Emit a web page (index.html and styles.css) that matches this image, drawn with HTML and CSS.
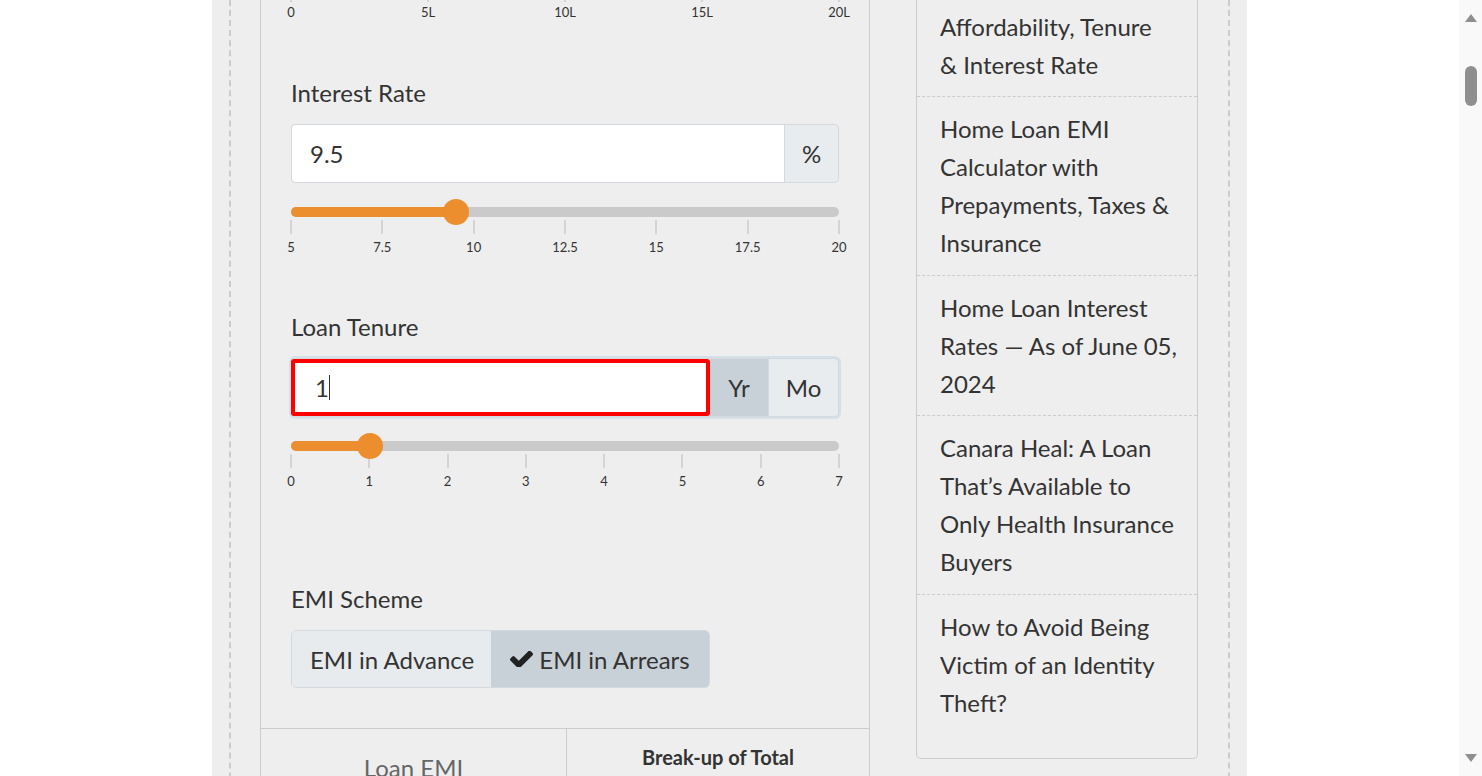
FILE: index.html
```html
<!DOCTYPE html>
<html lang="en">
<head>
<meta charset="utf-8">
<title>Home Loan EMI Calculator</title>
<link rel="stylesheet" href="styles.css">
</head>
<body>
<div class="page">
  <div class="frame">
    <div class="layout">
      <main class="calc">
        <div class="form">
          <div class="scale scale-top">
            <span class="tick"><i></i><b>0</b></span>
            <span class="tick"><i></i><b>5L</b></span>
            <span class="tick"><i></i><b>10L</b></span>
            <span class="tick"><i></i><b>15L</b></span>
            <span class="tick"><i></i><b>20L</b></span>
          </div>

          <div class="field">
            <label class="field-label">Interest Rate</label>
            <div class="input-group">
              <div class="input-box">9.5</div>
              <span class="addon addon-pct">%</span>
            </div>
            <div class="slider">
              <div class="track">
                <div class="fill" style="width:30%"></div>
                <span class="thumb" style="left:30%"></span>
              </div>
              <div class="scale">
                <span class="tick"><i></i><b>5</b></span>
                <span class="tick"><i></i><b>7.5</b></span>
                <span class="tick"><i></i><b>10</b></span>
                <span class="tick"><i></i><b>12.5</b></span>
                <span class="tick"><i></i><b>15</b></span>
                <span class="tick"><i></i><b>17.5</b></span>
                <span class="tick"><i></i><b>20</b></span>
              </div>
            </div>
          </div>

          <div class="field">
            <label class="field-label">Loan Tenure</label>
            <div class="input-group input-group-focus">
              <div class="input-box input-box-active">1<span class="caret"></span></div>
              <span class="addon addon-yr addon-on">Yr</span>
              <span class="addon addon-mo">Mo</span>
            </div>
            <div class="slider">
              <div class="track">
                <div class="fill" style="width:14.2857%"></div>
                <span class="thumb" style="left:14.2857%"></span>
              </div>
              <div class="scale">
                <span class="tick"><i></i><b>0</b></span>
                <span class="tick"><i></i><b>1</b></span>
                <span class="tick"><i></i><b>2</b></span>
                <span class="tick"><i></i><b>3</b></span>
                <span class="tick"><i></i><b>4</b></span>
                <span class="tick"><i></i><b>5</b></span>
                <span class="tick"><i></i><b>6</b></span>
                <span class="tick"><i></i><b>7</b></span>
              </div>
            </div>
          </div>

          <div class="field field-scheme">
            <label class="field-label">EMI Scheme</label>
            <div class="btn-group">
              <span class="btn">EMI in Advance</span>
              <span class="btn btn-on"><svg class="check" viewBox="121 362 1550 1064" width="23" height="16" aria-hidden="true"><path d="M1671 566q0 40-28 68l-724 724-136 136q-28 28-68 28t-68-28l-136-136-362-362q-28-28-28-68t28-68l136-136q28-28 68-28t68 28l294 295 656-657q28-28 68-28t68 28l136 136q28 28 28 68z"/></svg>EMI in Arrears</span>
            </div>
          </div>
        </div>

        <div class="results">
          <div class="result-cell result-emi">Loan EMI</div>
          <div class="result-cell result-breakup">Break-up of Total</div>
        </div>
      </main>

      <aside class="sidebar">
        <ul class="post-list">
          <li class="post">Affordability, Tenure &amp;&nbsp;Interest Rate</li>
          <li class="post">Home Loan EMI Calculator with Prepayments, Taxes &amp; Insurance</li>
          <li class="post">Home Loan Interest Rates — As of June 05, 2024</li>
          <li class="post">Canara Heal: A Loan That’s Available to Only Health Insurance Buyers</li>
          <li class="post">How to Avoid Being Victim of an Identity Theft?</li>
        </ul>
      </aside>
    </div>
  </div>
</div>

<div class="scrollbar" aria-hidden="true">
  <span class="sb-up"></span>
  <span class="sb-thumb"></span>
  <span class="sb-down"></span>
</div>
</body>
</html>
```

FILE: styles.css
```css
* { box-sizing: border-box; }

html, body {
  margin: 0;
  padding: 0;
  background: #ffffff;
}

body {
  font-family: "Lato", "Liberation Sans", sans-serif;
  color: #333333;
}

.page {
  width: 1035px;
  margin-left: 212px;
  background: #eeeeee;
  padding: 0 17px;
}

.frame {
  border-left: 2px dashed #cccccc;
  border-right: 2px dashed #cccccc;
  padding: 0 31px 0 29px;
}

.layout {
  display: flex;
  align-items: flex-start;
  gap: 46px;
  min-height: 1200px;
}

/* ---------- calculator panel ---------- */
.calc {
  width: 610px;
  flex: none;
  align-self: stretch;
  border-left: 1px solid #cccccc;
  border-right: 1px solid #cccccc;
}

.form {
  padding: 0 30px 40px;
}

.field {
  margin-top: 57px;
}

.scale-top + .field {
  margin-top: 58px;
}

.field-scheme {
  margin-top: 95px;
}

.field-label {
  display: block;
  font-size: 24px;
  line-height: 30px;
  margin-bottom: 16px;
  color: #333333;
}

.input-group {
  display: flex;
  height: 59px;
  border: 1px solid #d3d9de;
  border-radius: 4px;
  background: #e9ecef;
}

.input-box {
  flex: 1;
  display: flex;
  align-items: center;
  background: #ffffff;
  border-radius: 4px 0 0 4px;
  padding-left: 18px;
  font-size: 24px;
  color: #333333;
}

.input-group-focus {
  box-shadow: 0 0 0 2px #d6e0e8;
}

.input-box-active {
  border: 4px solid #ff0000;
  border-radius: 3px;
  margin: 0 0 0 -1px;
  padding-left: 20px;
}

.caret {
  display: inline-block;
  width: 1px;
  height: 25px;
  background: #333333;
}

.addon {
  display: flex;
  align-items: center;
  justify-content: center;
  font-size: 24px;
  color: #333333;
}

.addon-pct {
  width: 54px;
  border-left: 1px solid #d3d9de;
}

.addon-yr {
  width: 58px;
}

.addon-mo {
  width: 70px;
  border-left: 1px solid #d3d9de;
  border-radius: 0 4px 4px 0;
}

.addon-on {
  background: #c9d1d8;
}

/* ---------- sliders ---------- */
.slider {
  padding-top: 24px;
}

.track {
  position: relative;
  height: 10px;
  border-radius: 5px;
  background: #cacaca;
}

.fill {
  height: 10px;
  border-radius: 5px;
  background: #ec8d2e;
}

.thumb {
  position: absolute;
  top: -8px;
  width: 26px;
  height: 26px;
  margin-left: -12px;
  border-radius: 50%;
  background: #ec8d2e;
}

.scale {
  display: flex;
  justify-content: space-between;
  padding-top: 3px;
}

.tick {
  width: 0;
  display: flex;
  flex-direction: column;
  align-items: center;
}

.tick i {
  display: block;
  flex: none;
  width: 2px;
  height: 14px;
  background: #d4d4d4;
}

.tick b {
  display: block;
  font-weight: 400;
  font-size: 13px;
  line-height: 16px;
  margin-top: 5px;
  white-space: nowrap;
  color: #333333;
}

.scale-top {
  padding-top: 0;
}

.scale-top .tick i {
  height: 2px;
}

.scale-top .tick b {
  margin-top: 2px;
}

/* ---------- EMI scheme buttons ---------- */
.btn-group {
  display: inline-flex;
  height: 58px;
  border: 1px solid #d3d9de;
  border-radius: 5px;
  overflow: hidden;
}

.btn {
  display: flex;
  align-items: center;
  padding: 0 17px 0 18px;
  font-size: 24px;
  background: #e8ebee;
  color: #333333;
}

.btn-on {
  padding: 0 19px;
  background: #c9d1d8;
}

.check {
  fill: #222222;
  margin-right: 6px;
}

/* ---------- results ---------- */
.results {
  display: grid;
  grid-template-columns: 305px 1fr;
  border-top: 1px solid #cccccc;
}

.result-cell {
  text-align: center;
}

.result-emi {
  padding-top: 24px;
  font-size: 24px;
  line-height: 30px;
  color: #666666;
}

.result-breakup {
  border-left: 1px solid #cccccc;
  padding-top: 15px;
  font-size: 20px;
  line-height: 26px;
  font-weight: 700;
  color: #333333;
}

/* ---------- sidebar ---------- */
.sidebar {
  width: 282px;
  flex: none;
  border: 1px solid #cccccc;
  border-top: none;
  border-radius: 0 0 5px 5px;
  padding-bottom: 23px;
}

.post-list {
  list-style: none;
  margin: 0;
  padding: 0;
}

.post {
  padding: 13px 20px 13px 23px;
  font-size: 24px;
  line-height: 38px;
  color: #333333;
  border-bottom: 1px dashed #cccccc;
}

.post:first-child {
  padding-top: 8px;
  padding-bottom: 12px;
}

.post:nth-child(3) {
  padding-bottom: 12px;
}

.post:last-child {
  border-bottom: none;
}

/* ---------- browser scrollbar ---------- */
.scrollbar {
  position: fixed;
  top: 0;
  right: 0;
  width: 23px;
  height: 100vh;
  background: #f9f9f9;
  display: flex;
  flex-direction: column;
  align-items: center;
}

.sb-up {
  margin-top: 14px;
  border-left: 6px solid transparent;
  border-right: 6px solid transparent;
  border-bottom: 8px solid #8f8f8f;
}

.sb-thumb {
  margin-top: 44px;
  width: 12px;
  height: 40px;
  border-radius: 6px;
  background: #8f8f8f;
}

.sb-down {
  margin-top: auto;
  margin-bottom: 14px;
  border-left: 6px solid transparent;
  border-right: 6px solid transparent;
  border-top: 8px solid #8f8f8f;
}
```
